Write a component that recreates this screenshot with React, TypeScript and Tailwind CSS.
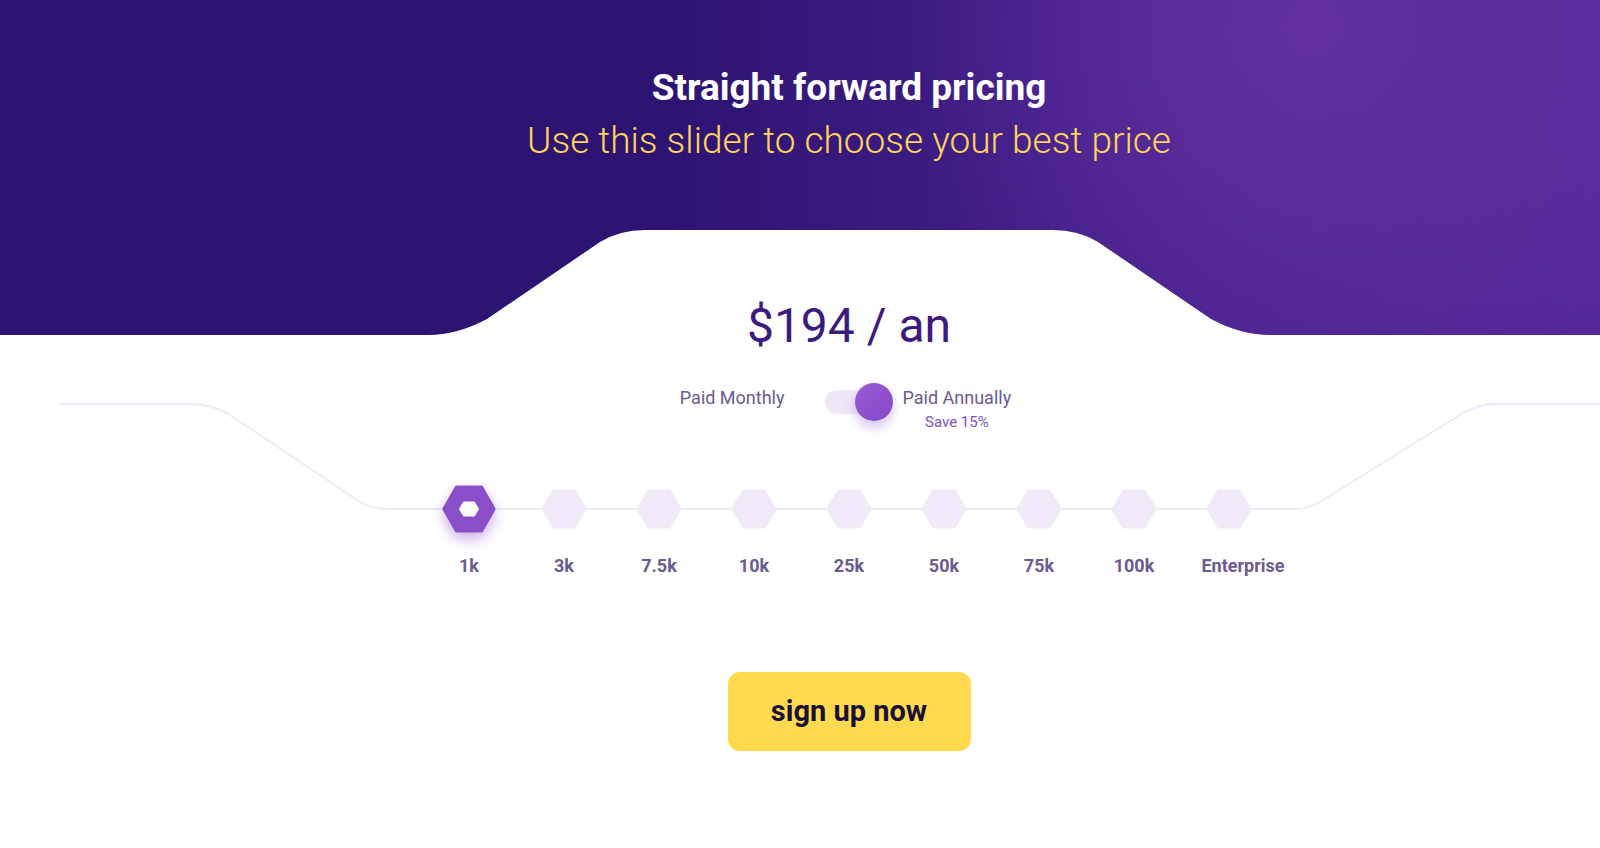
import { useState } from 'react';

const tiers = ['1k', '3k', '7.5k', '10k', '25k', '50k', '75k', '100k', 'Enterprise'];

const Hex = ({ active }: { active: boolean }) =>
  active ? (
    <svg width="54" height="48" viewBox="0 0 54 48" className="drop-shadow-[0_6px_7px_rgba(138,76,200,0.45)]">
      <path
        d="M15 3 L39 3 L51 24 L39 45 L15 45 L3 24 Z"
        fill="#8b4ec9"
        stroke="#8b4ec9"
        strokeWidth="5"
        strokeLinejoin="round"
      />
      <path
        d="M22 17.5 L32 17.5 L36 24 L32 30.5 L22 30.5 L18 24 Z"
        fill="#ffffff"
        stroke="#ffffff"
        strokeWidth="2"
        strokeLinejoin="round"
      />
    </svg>
  ) : (
    <svg width="46" height="40" viewBox="0 0 46 40">
      <path
        d="M13 2.5 L33 2.5 L43.5 20 L33 37.5 L13 37.5 L2.5 20 Z"
        fill="#efe9f8"
        stroke="#efe9f8"
        strokeWidth="4"
        strokeLinejoin="round"
      />
    </svg>
  );

const App = () => {
  const [annual, setAnnual] = useState(true);
  const [tier, setTier] = useState(0);

  return (
    <div className="min-h-[848px] w-full bg-white font-['Roboto',sans-serif] overflow-hidden">
      {/* Header */}
      <header className="relative h-[335px] w-full bg-[image:radial-gradient(circle_at_82%_8%,#6331a0_0%,rgba(99,49,160,0)_30%),linear-gradient(90deg,#2d1470_0%,#2e1472_42%,#43208a_68%,#55289a_100%)]">
        <div className="pl-[98px] pt-[66px] flex flex-col items-center text-center">
          <h1 className="text-[37px] leading-[44px] font-bold text-white">Straight forward pricing</h1>
          <p className="text-[37px] leading-[44px] font-light text-[#ffd45c] mt-[9px]">
            Use this slider to choose your best price
          </p>
        </div>
        <svg
          className="absolute left-0 bottom-0"
          width="1600"
          height="106"
          viewBox="0 0 1600 106"
        >
          <path
            d="M428 106 Q457 106 487 90 L600 13 Q620 1 645 1 L1053 1 Q1078 1 1098 13 L1211 90 Q1241 106 1270 106 Z"
            fill="#ffffff"
          />
        </svg>
      </header>

      {/* Main */}
      <main className="relative -mt-[37px]">
        <svg
          className="absolute left-0 top-0 pointer-events-none"
          width="1600"
          height="260"
          viewBox="0 0 1600 260"
        >
          <path
            d="M60 106 H190 Q210 106 227 115 L360 204 Q372 211 390 211 H1293 Q1308 211 1320 204 L1463 115 Q1478 106 1497 106 H1600"
            fill="none"
            stroke="#efe8f9"
            strokeWidth="2"
          />
        </svg>

        <div className="relative pl-[98px] flex flex-col items-center">
          <div className="text-[48px] leading-[56px] text-[#3d1a7e]">
            ${annual ? '194' : '19'} / {annual ? 'an' : 'mo'}
          </div>

          {/* Toggle */}
          <div className="flex items-start mt-[29px] pr-[7px]">
            <span className="mt-[4px] text-[18px] leading-[22px] text-[#6b5b8f]">Paid Monthly</span>
            <button
              onClick={() => setAnnual(!annual)}
              className="relative ml-[40px] w-[68px] h-[38px]"
            >
              <span className="absolute left-0 top-[7px] w-[60px] h-[24px] rounded-full bg-[#efe7f8]" />
              <span
                className={
                  annual
                    ? 'absolute right-0 top-0 w-[38px] h-[38px] rounded-full bg-[linear-gradient(135deg,#9a5bd8,#8447c4)] shadow-[0_6px_12px_rgba(138,76,200,0.35)]'
                    : 'absolute left-0 top-0 w-[38px] h-[38px] rounded-full bg-[linear-gradient(135deg,#9a5bd8,#8447c4)] shadow-[0_6px_12px_rgba(138,76,200,0.35)]'
                }
              />
            </button>
            <div className="ml-[10px] mt-[4px] flex flex-col items-center">
              <span className="text-[18px] leading-[22px] text-[#6b5b8f]">Paid Annually</span>
              <span className="mt-[4px] text-[15px] leading-[18px] text-[#7b52c0]">Save 15%</span>
            </div>
          </div>

          {/* Slider */}
          <div className="flex mt-[54px]">
            {tiers.map((t, i) => (
              <button key={t} onClick={() => setTier(i)} className="w-[95px] flex flex-col items-center">
                <div className="h-[48px] flex items-center justify-center">
                  <Hex active={i === tier} />
                </div>
                <span
                  className={
                    t === 'Enterprise'
                      ? 'mt-[22px] ml-[28px] whitespace-nowrap text-[18px] leading-[22px] font-bold text-[#6b5b8f]'
                      : 'mt-[22px] whitespace-nowrap text-[18px] leading-[22px] font-bold text-[#6b5b8f]'
                  }
                >
                  {t}
                </span>
              </button>
            ))}
          </div>

          <button className="mt-[95px] w-[243px] h-[79px] rounded-[12px] bg-[#ffda4f] text-[29px] font-bold text-[#1a1036]">
            sign up now
          </button>
        </div>
      </main>
    </div>
  );
};

export default App;
